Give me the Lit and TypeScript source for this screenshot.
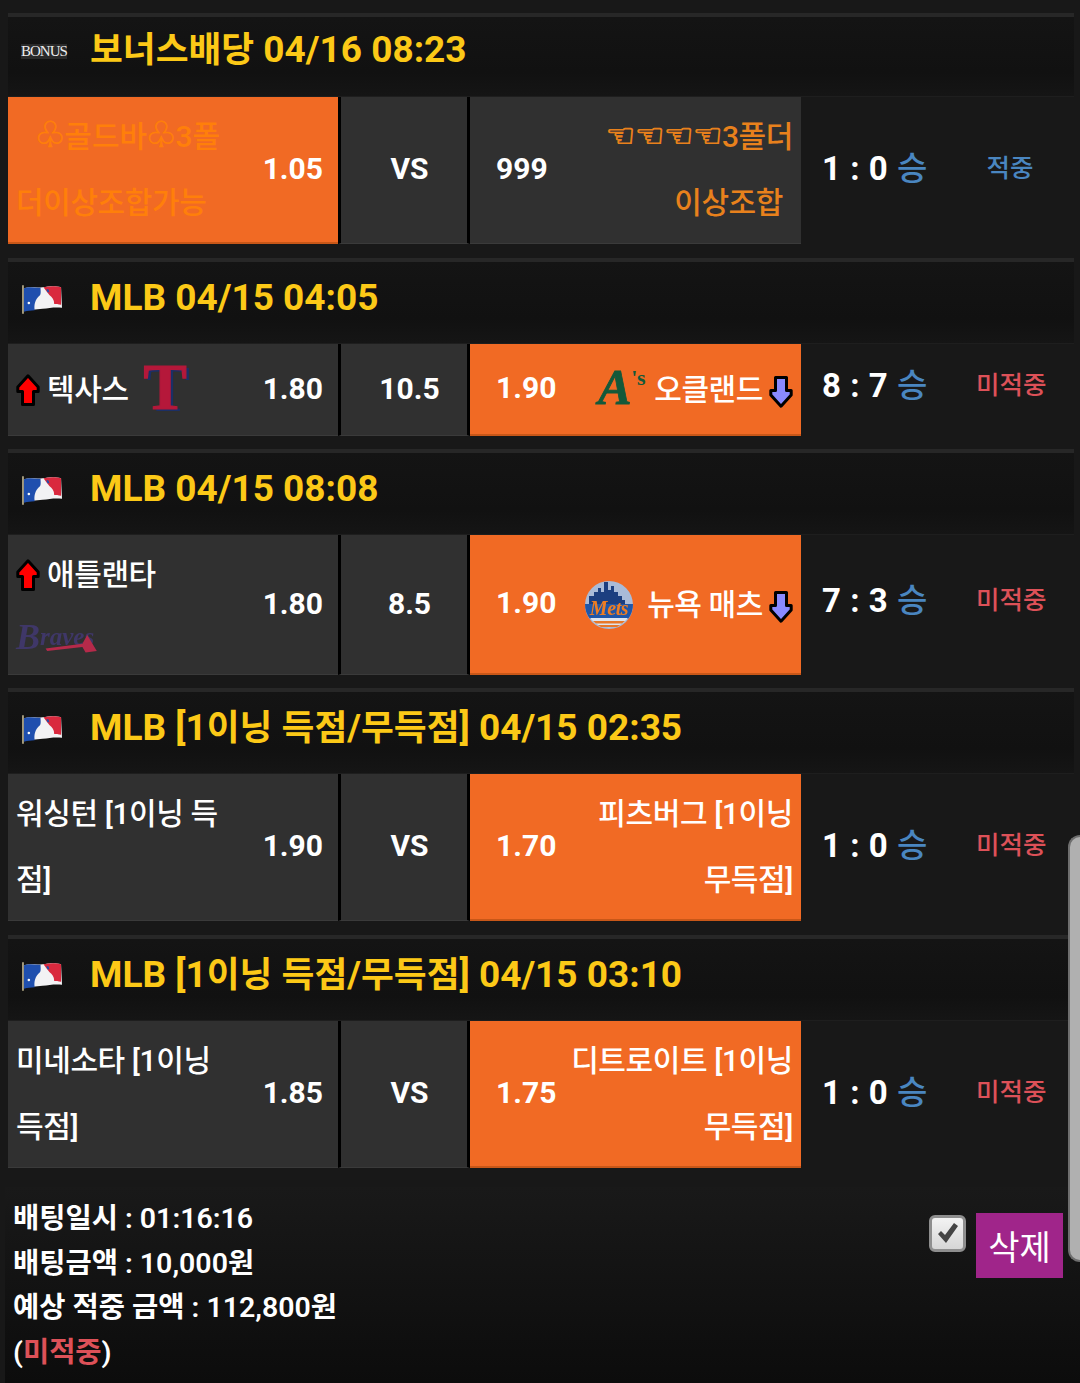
import { LitElement, html, css } from "lit";
import { customElement } from "lit/decorators.js";

const up = html`<svg class="arrow upa" viewBox="0 0 24 32"><path d="M12 1.800 22.200 13v4.500H17.500v13H6.500v-13H1.800V13Z" fill="#f00" stroke="#000" stroke-width="3" stroke-linejoin="round"/></svg>`;
const down = html`<svg class="arrow" viewBox="0 0 24 32"><path d="M12 30.200 22.200 19v-4.500H17.500V1.500H6.500v13H1.800V19Z" fill="#8a8aff" stroke="#000" stroke-width="3" stroke-linejoin="round"/></svg>`;

const flag = html`<svg class="flag" viewBox="0 0 42 30">
  <path d="M1 1v29" stroke="#c9bd96" stroke-width="1.600"/>
  <path d="M2 4c6-2 12 0 19-1 6-1 13-2 19 0l1 21c-6-1-13 0-20 1-7 1-13 1-19 2Z" fill="#f2f2f4"/>
  <path d="M2 4c6-2 12 0 17-.500 0 4 1 7-2 9-3 3-5 8-4 14-4 .3-7 .5-11 1.500Z" fill="#1f4fae"/>
  <path d="M22 3c6-1 12-2 18 0v18c-3-1-5-1-7-1 0-4-2-7-5-9-2-3-4-5-6-8Z" fill="#d9293e"/>
  <path d="M25 5h2l1 3h-2Z" fill="#1f4fae"/>
  <circle cx="7" cy="19" r="1.300" fill="#fff"/>
</svg>`;

const texas = html`<span class="texas">T</span>`;
const oak = html`<span class="oak"><span class="oak-a">A</span><span class="oak-s">'s</span></span>`;
const braves = html`<span class="braves"><span class="bb">B</span>raves<svg class="tomahawk" viewBox="0 0 70 24"><path d="M2 19 48 13 54 2 66 22 52 24 48 17 4 22Z" fill="#b52a4a"/></svg></span>`;
const mets = html`<svg class="mets" viewBox="0 0 50 50">
  <circle cx="25" cy="25" r="24" fill="#a9bbd8"/>
  <path d="M5 24V16h5v-4h4V8h3v4h3V2h4v8h3V6h3v6h4v4h4v4h3v4Z" fill="#1c3f80"/>
  <path d="M1 24h48a24 24 0 0 1-5 15H6A24 24 0 0 1 1 24Z" fill="#1f56a8"/>
  <path d="M6 38h38a24 24 0 0 1-38 0Z" fill="#dfe5ee"/>
  <path d="M9 41h32l-3 2.500H12ZM14 45h22l-3 2H17Z" fill="#e8782a"/>
  <text x="25" y="35" text-anchor="middle" font-family="Liberation Serif" font-style="italic" font-weight="700" font-size="20" fill="#ef7d22">Mets</text>
</svg>`;

const titleParts = (t: string) =>
  t.split(/([가-힣]+)/).map((p, i) => (i % 2 ? html`<span class="ko">${p}</span>` : p));

const rows = [
  {
    icon: html`<span class="bonus">BONUS</span>`, title: "보너스배당 04/16 08:23", h: "h147", head: "hd1",
    pick: "left", v: "VS", lo: "1.05", ro: "999", score: "1 : 0", res: "적중", hit: true,
    left: html`<div class="lines gold"><span class="ind"><i class="sym">♧</i>골드바<i class="sym">♧</i>3폴</span><span>더이상조합가능</span></div>`,
    right: html`<div class="lines rt amber"><span><i class="sym hand">☜☜☜☜</i>3폴더</span><span class="in10">이상조합</span></div>`,
  },
  {
    icon: flag, title: "MLB 04/15 04:05", h: "h92", head: "hd2",
    pick: "right", v: "10.5", lo: "1.80", ro: "1.90", score: "8 : 7", res: "미적중", hit: false,
    left: html`<div class="one">${up}<span>텍사스</span>${texas}</div>`,
    right: html`<div class="one end">${oak}<span>오클랜드</span>${down}</div>`,
  },
  {
    icon: flag, title: "MLB 04/15 08:08", h: "h140", head: "hd2",
    pick: "right", v: "8.5", lo: "1.80", ro: "1.90", score: "7 : 3", res: "미적중", hit: false,
    left: html`<div class="stack"><div class="one">${up}<span>애틀랜타</span></div>${braves}</div>`,
    right: html`<div class="one end">${mets}<span>뉴욕 매츠</span>${down}</div>`,
  },
  {
    icon: flag, title: "MLB [1이닝 득점/무득점] 04/15 02:35", h: "h147", head: "hd2",
    pick: "right", v: "VS", lo: "1.90", ro: "1.70", score: "1 : 0", res: "미적중", hit: false,
    left: html`<div class="lines"><span>워싱턴 [1이닝 득</span><span>점]</span></div>`,
    right: html`<div class="lines rt"><span>피츠버그 [1이닝</span><span>무득점]</span></div>`,
  },
  {
    icon: flag, title: "MLB [1이닝 득점/무득점] 04/15 03:10", h: "h147", head: "hd2",
    pick: "right", v: "VS", lo: "1.85", ro: "1.75", score: "1 : 0", res: "미적중", hit: false,
    left: html`<div class="lines"><span>미네소타 [1이닝</span><span>득점]</span></div>`,
    right: html`<div class="lines rt"><span>디트로이트 [1이닝</span><span>무득점]</span></div>`,
  },
];

@customElement("app-root")
export class AppRoot extends LitElement {
  static styles = css`
    :host {
      display: block;
      position: relative;
      height: 1383px;
      overflow: hidden;
      background: #181818;
      color: #fff;
      padding-top: 13px;
      box-sizing: border-box;
      font-family: Roboto, "Noto Sans CJK KR", sans-serif;
      font-weight: 500;
    }
    .section { margin: 0 6px 13px 8px; }
    .section:nth-of-type(1), .section:nth-of-type(4) { margin-bottom: 14px; }
    .rule { height: 4px; background: #272727; }
    .head {
      display: flex;
      align-items: center;
      background: linear-gradient(#141414, #111 70%, #151515);
      border-bottom: 1px solid #1e1e1e;
      color: #fcc917;
      font-size: 37px;
      line-height: 44px;
      font-weight: 700;
      padding-left: 13px;
      box-sizing: border-box;
    }
    .ko { font-size: 35.700px; line-height: 40px; }
    .hd1 { height: 80px; padding-bottom: 14px; }
    .hd2 { height: 82px; padding-bottom: 10px; }
    .ico { width: 69px; display: flex; align-items: center; flex: none; }
    .flag { width: 41px; height: 30px; margin: 2px 0 0 1px; }
    .bonus {
      background: #2a2a2a;
      color: #eee;
      font: 400 15px/15px "Liberation Serif", serif;
      letter-spacing: -1px;
      display: block;
      width: 46px;
      margin-top: 4px;
      white-space: nowrap;
    }
    .row {
      display: grid;
      grid-template-columns: 330px 132px 331px 1fr;
      margin-right: -3px;
    }
    .h147 { height: 147px; }
    .h92 { height: 92px; }
    .h140 { height: 140px; }
    .cell {
      background: #303030;
      border-bottom: 1px solid #3a3a3a;
      box-sizing: border-box;
      display: flex;
      align-items: center;
      font-size: 30px;
      min-width: 0;
    }
    .cell.sel { background: #f16a24; border-bottom: 2px solid #c85718; }
    .lft { justify-content: space-between; padding: 0 15px 0 8px; }
    .mid {
      justify-content: center;
      font-weight: 700;
      padding: 0 0 3px 11px;
      border-left: 3px solid #000;
      border-right: 3px solid #000;
    }
    .rgt { justify-content: space-between; padding: 0 8px 0 26px; }
    .odds { flex: none; font-weight: 700; padding-bottom: 3px; }
    .lines {
      display: flex;
      flex-direction: column;
      line-height: 66px;
      font-size: 30px;
      white-space: nowrap;
      letter-spacing: -0.400px;
    }
    .lines.rt { align-items: flex-end; }
    .ind { padding-left: 20px; letter-spacing: 0; }
    .in10 { padding-right: 10px; }
    .gold { color: #ff7f0a; }
    .amber { color: #e8811c; }
    .sym {
      font-family: "DejaVu Sans", sans-serif;
      font-style: normal;
      font-size: 36px;
      line-height: 0;
      margin: 0 -2px;
      -webkit-text-stroke: 0.700px #ff7f0a;
    }
    .hand {
      font-size: 33px;
      letter-spacing: -0.500px;
      margin: 0;
      -webkit-text-stroke: 1px #e8811c;
    }
    .one { display: flex; align-items: center; white-space: nowrap; font-size: 30px; letter-spacing: -0.400px; padding-bottom: 5px; }
    .one.end { justify-content: flex-end; }
    .stack { display: flex; flex-direction: column; align-items: flex-start; gap: 22px; margin-top: -6px; }
    .arrow { width: 24px; height: 32px; flex: none; margin-right: 7px; }
    .upa { margin-top: 6px; }
    .one.end .arrow { margin: 10px 0 0 6px; }
    .texas {
      font: 700 65px/52px "Liberation Serif", serif;
      color: #b5183a;
      text-shadow: 3px 2px 0 #1b2f66;
      -webkit-text-stroke: 1.200px #b5183a;
      margin-left: 15px;
    }
    .oak { display: flex; align-items: flex-start; margin-right: 9px; color: #14593a; }
    .oak-a { font: italic 700 50px/46px "Liberation Serif", serif; -webkit-text-stroke: 0.800px #14593a; }
    .oak-s { font: 700 22px/28px "Liberation Serif", serif; }
    .braves {
      font: italic 700 25px/32px "Liberation Serif", serif;
      color: #3f3768;
      display: flex;
      align-items: center;
      width: 84px;
      position: relative;
      filter: blur(0.600px);
    }
    .bb { font-size: 36px; }
    .tomahawk { width: 56px; height: 20px; position: absolute; left: 28px; top: 12px; }
    .mets { width: 50px; height: 50px; margin: 6px 13px 0 0; flex: none; filter: blur(0.500px); }
    .score {
      display: flex;
      align-items: center;
      justify-content: space-between;
      padding: 0 33px 10px 21px;
      font-size: 33px;
      font-weight: 700;
      white-space: nowrap;
    }
    .h92 .score, .h140 .score { padding-bottom: 15px; }
    .nums { letter-spacing: 0.500px; }
    .blue { color: #4a86c0; }
    .red { color: #dd5158; }
    .win { margin-left: 9px; font-size: 33px; font-weight: 500; }
    .res { font-size: 25.500px; font-weight: 500; width: 68px; text-align: center; }
    .foot {
      margin: 19px 0 0 5px;
      height: 196px;
      background: linear-gradient(#191919, #0c0c0c);
      display: flex;
      justify-content: space-between;
      padding: 10px 17px 0 8px;
      box-sizing: border-box;
      font-size: 28.500px;
      line-height: 44.500px;
      font-weight: 600;
    }
    .ctl { display: flex; align-items: flex-start; gap: 10px; margin-top: 16px; }
    .check {
      width: 37px;
      height: 37px;
      margin-top: 2px;
      border: 3px solid #8e8e8e;
      border-radius: 6px;
      background: linear-gradient(#f3f3f3, #d6d6d6);
      box-sizing: border-box;
      display: block;
    }
    .check svg { display: block; width: 31px; height: 31px; }
    .del {
      width: 87px;
      height: 65px;
      background: #a0258a;
      color: #fff;
      border: 0;
      padding: 0;
      font: 400 34px/52px "Noto Sans CJK KR", sans-serif;
      text-align: center;
    }
    .bar {
      position: absolute;
      right: 0;
      top: 835px;
      width: 12px;
      height: 427px;
      box-sizing: border-box;
      background: #b0b0b0;
      border: 2px solid #6e6e6e;
      border-right: 0;
      border-radius: 12px 0 0 12px;
    }
  `;

  render() {
    return html`
      ${rows.map(
        (r) => html`<div class="section">
          <div class="rule"></div>
          <div class="head ${r.head}"><span class="ico">${r.icon}</span><span>${titleParts(r.title)}</span></div>
          <div class="row ${r.h}">
            <div class="cell lft ${r.pick === "left" ? "sel" : ""}">${r.left}<span class="odds">${r.lo}</span></div>
            <div class="cell mid">${r.v}</div>
            <div class="cell rgt ${r.pick === "right" ? "sel" : ""}"><span class="odds">${r.ro}</span>${r.right}</div>
            <div class="score">
              <span><span class="nums">${r.score}</span><span class="win blue">승</span></span>
              <span class="res ${r.hit ? "blue" : "red"}">${r.res}</span>
            </div>
          </div>
        </div>`
      )}
      <div class="foot">
        <div>
          <div>배팅일시 : 01:16:16</div>
          <div>배팅금액 : 10,000원</div>
          <div>예상 적중 금액 : 112,800원</div>
          <div>(<span class="red">미적중</span>)</div>
        </div>
        <div class="ctl">
          <span class="check"><svg viewBox="0 0 31 31"><path d="M6 16l3-3 4 4 9-12 4 3-12 17Z" fill="#444"/></svg></span>
          <button class="del">삭제</button>
        </div>
      </div>
      <div class="bar"></div>
    `;
  }
}
